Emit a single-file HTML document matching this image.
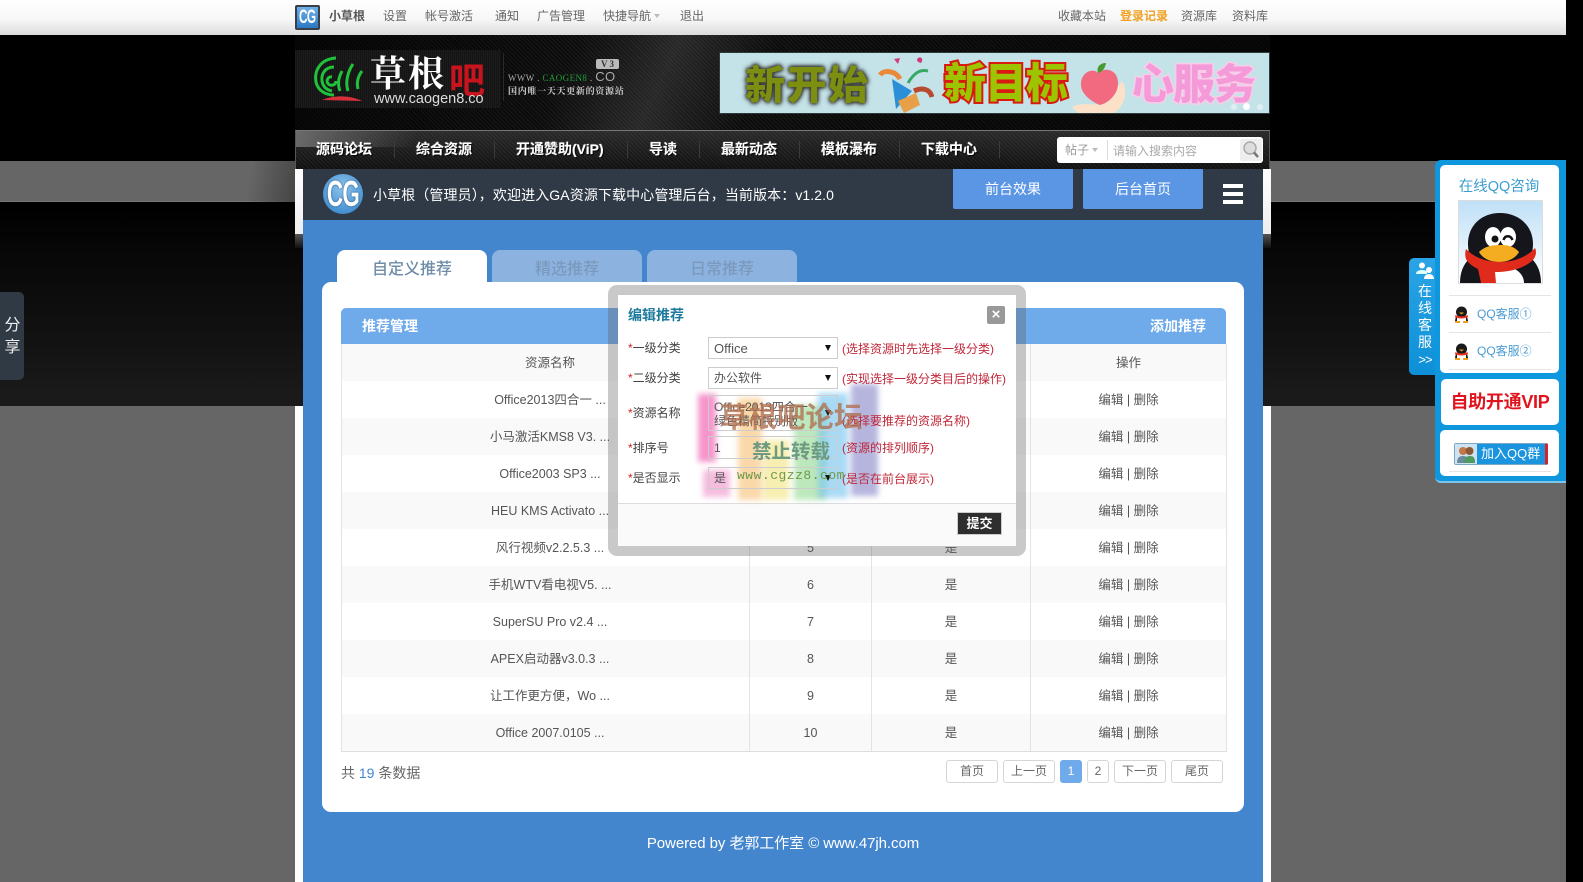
<!DOCTYPE html>
<html lang="zh"><head><meta charset="utf-8"><title>推荐管理</title>
<style>
*{box-sizing:border-box}
html,body{margin:0;padding:0;width:1583px;height:882px;overflow:hidden;background:#000}
body{position:relative;font-family:"Liberation Sans","Noto Sans CJK SC",sans-serif;font-size:12px;color:#555}
.a{position:absolute;white-space:nowrap}
.t{position:absolute;white-space:nowrap;line-height:20px;height:20px}
.top{color:#666;font-size:12px;top:6px}
.nv{position:absolute;top:139px;height:20px;line-height:20px;color:#fff;font-weight:bold;font-size:14px;text-shadow:1px 1px 1px #000,0 0 1px #fff;white-space:nowrap}
.sp{position:absolute;top:141px;width:1px;height:17px;background:#3b3b3b}
table{border-collapse:collapse;table-layout:fixed;position:absolute;left:341px;top:344px;width:885px;font-size:12.5px;color:#555}
td{height:37px;padding:1px 0 0;text-align:center;border-right:1px solid #e3e3e3;line-height:36px;white-space:nowrap}
td:first-child{padding-left:9px;border-left:1px solid #e3e3e3}
tr:nth-child(odd){background:#f9f9f9}
tr:last-child td{border-bottom:1px solid #ddd}
.pg{position:absolute;top:760px;height:23px;line-height:20px;text-align:center;border:1px solid #d5d5d5;border-radius:3px;background:#fff;color:#666;font-size:12px}
.lb{position:absolute;left:628px;height:20px;line-height:20px;font-size:12px;color:#444;white-space:nowrap}
.lb b{font-weight:normal;color:#c22}
.sel{position:absolute;left:708px;width:130px;border:1px solid #ccc;background:#fff;font-size:12px;color:#555;padding:0 5px;white-space:nowrap}
.sel i{position:absolute;right:6px;top:50%;margin-top:-3px;width:0;height:0;border-left:3.5px solid transparent;border-right:3.5px solid transparent;border-top:6px solid #111}
.ht{position:absolute;left:842px;height:20px;line-height:20px;font-size:12px;color:#c0283a;white-space:nowrap}
.bl{position:absolute;filter:blur(3px);opacity:.58}
</style></head><body>

<!-- page backgrounds -->
<div class="a" style="left:0;top:161px;width:1566px;height:41px;background:#666;border-bottom:1px solid #777"></div>
<div class="a" style="left:240px;top:161px;width:55px;height:41px;background:linear-gradient(100deg,rgba(68,68,68,0) 20%,#454545 100%)"></div>
<div class="a" style="left:0;top:202px;width:1566px;height:204px;background:linear-gradient(#000,#1b1b1b)"></div>
<div class="a" style="left:0;top:406px;width:1566px;height:476px;background:#666"></div>
<div class="a" style="left:295px;top:406px;width:976px;height:476px;background:#fff"></div>
<div class="a" style="left:295px;top:169px;width:976px;height:65px;background:linear-gradient(#fff,#eee)"></div>
<div class="a" style="left:295px;top:234px;width:976px;height:14px;background:linear-gradient(#555,#111)"></div>
<div class="a" style="left:295px;top:35px;width:975px;height:95px;background:repeating-linear-gradient(45deg,#1c1c1c 0,#1c1c1c 1px,#0d0d0d 1px,#0d0d0d 3px)"></div>
<div class="a" style="left:295px;top:35px;width:975px;height:95px;background:linear-gradient(115deg,rgba(0,0,0,.7) 0,rgba(0,0,0,.1) 28%,rgba(90,90,90,.35) 38%,rgba(0,0,0,.1) 48%,rgba(0,0,0,.7) 100%)"></div>

<!-- top bar -->
<div class="a" style="left:0;top:0;width:1566px;height:35px;background:linear-gradient(#fff 0,#f7f7f7 55%,#dcdcdc 100%)"></div>
<div class="a" style="left:295px;top:5px;width:25px;height:25px;background:#3a3f47;border-radius:2px;padding:2px"><div style="width:21px;height:21px;background:linear-gradient(#6fb0e8,#2a78c4);color:#fff;text-align:center;overflow:hidden"><span style="display:inline-block;font:bold 19px/21px 'Liberation Sans',sans-serif;transform:scaleX(.62);transform-origin:50% 50%;margin-left:-6px;margin-right:-6px;letter-spacing:-1px">CG</span></div></div>
<div class="t top" style="left:329px;font-weight:bold;color:#555">小草根</div>
<div class="t top" style="left:383px">设置</div>
<div class="t top" style="left:425px">帐号激活</div>
<div class="t top" style="left:495px">通知</div>
<div class="t top" style="left:537px">广告管理</div>
<div class="t top" style="left:603px">快捷导航</div>
<div class="a" style="left:654px;top:14px;border-left:3.5px solid transparent;border-right:3.5px solid transparent;border-top:4px solid #bbb"></div>
<div class="t top" style="left:680px">退出</div>
<div class="t top" style="left:1058px">收藏本站</div>
<div class="t top" style="left:1120px;color:#f0a020;font-weight:bold">登录记录</div>
<div class="t top" style="left:1181px">资源库</div>
<div class="t top" style="left:1232px">资料库</div>

<!-- logo -->
<div class="a" style="left:295px;top:50px;width:206px;height:58px;background:repeating-linear-gradient(90deg,#1c1c1c 0,#1c1c1c 1px,#141414 1px,#141414 2px)"></div>
<svg class="a" style="left:312px;top:53px" width="56" height="52" viewBox="0 0 56 52"><g fill="none" stroke="#1fc23a" stroke-width="3"><path d="M24 5C8 6 2 18 4 29c2 9 10 13 18 13"/><path d="M22 14c-9 0-13 7-12 14 1 6 5 9 10 10"/><path d="M20 24c-5-1-7 6-2 8 3 1 6-1 6-4M28 38c-3-8-1-14 2-20M36 38c-3-9 0-20 5-27M46 36c-2-8 1-14 4-18"/></g><path d="M10 47c12-5 28-5 40 1z" fill="#d8303a"/></svg>
<div class="a" style="left:370px;top:50px;font:bold 36px/44px 'Noto Serif CJK SC','Liberation Serif',serif;color:#fff;letter-spacing:2px">草根</div>
<div class="a" style="left:449px;top:56px;font:bold 36px/44px 'Noto Sans CJK SC',sans-serif;color:#c8141e">吧</div>
<div class="a" style="left:374px;top:90px;font:14.5px/18px 'Liberation Sans',sans-serif;color:#ddd">www.caogen8.co</div>
<div class="a" style="left:503px;top:53px;width:1px;height:48px;background:#2a2a2a"></div>
<div class="a" style="left:596px;top:59px;width:23px;height:10px;background:#bbb;border-radius:2px;font:bold 9px/10px 'Liberation Serif',serif;color:#333;text-align:center">V 3</div>
<div class="a" style="left:508px;top:69px;font:9px/14px 'Liberation Serif',serif;color:#aaa;letter-spacing:.4px">WWW . <span style="color:#1e9c3a">CAOGEN8</span> . <span style="font:13px 'Liberation Sans',sans-serif">CO</span></div>
<div class="a" style="left:508px;top:84px;font:bold 9px/14px 'Noto Serif CJK SC',serif;color:#ccc;letter-spacing:.7px">国内唯一天天更新的资源站</div>

<!-- banner -->
<div class="a" style="left:719px;top:52px;width:551px;height:62px;background:#c4e3e8;border:1px solid #2d3a3a;overflow:hidden">
 <div class="a" style="left:25px;top:5px;font:900 40px/48px 'Noto Sans CJK SC',sans-serif;color:#7d8f10;letter-spacing:1.500px;text-shadow:0 0 3px #333,0 0 5px #333,0 0 6px #333">新开始</div>
 <svg class="a" style="left:158px;top:2px" width="56" height="60" viewBox="0 0 56 60"><path d="M14 24l20 12-16 18z" fill="#2a8fd6"/><path d="M20 46l18-8 4 12-16 8z" fill="#e8a048"/><path d="M22 24C18 16 6 14 2 20" stroke="#e88a3a" stroke-width="5" fill="none"/><path d="M30 28C36 18 42 14 50 16" stroke="#38a868" stroke-width="3" fill="none"/><path d="M36 36c8-4 16-2 18 6" stroke="#b84a30" stroke-width="5" fill="none"/><path d="M16 4l6-1-2 6zM40 3c3-2 6 1 3 5-4-1-5-3-3-5z" fill="#d03a7a"/></svg>
 <div class="a" style="left:224px;top:0;font:900 42px/56px 'Noto Sans CJK SC',sans-serif;color:#9cc400;-webkit-text-stroke:4px #d81a10;paint-order:stroke fill;letter-spacing:-1px">新目标</div>
 <svg class="a" style="left:352px;top:8px" width="60" height="54" viewBox="0 0 60 54"><path d="M0 46c12-6 22 0 34-4l16-22c6 8 4 24-8 32H6z" fill="#fbe1c8"/><path d="M26 12c6-6 20-4 20 10 0 12-10 20-18 22C18 40 8 32 9 22 10 10 22 7 26 12z" fill="#f26a80"/><path d="M26 12c-2-6 2-10 8-10-1 6-4 9-8 10z" fill="#4a9a30"/></svg>
 <div class="a" style="left:412px;top:2px;font:900 42px/54px 'Noto Sans CJK SC',sans-serif;color:#f59ad8;letter-spacing:-1px;-webkit-text-stroke:3px #f9cdea;paint-order:stroke fill">心服务</div>
 <div class="a" style="left:511px;top:51px;width:6px;height:6px;background:#dfeef0;border-radius:50%"></div>
 <div class="a" style="left:523px;top:50px;width:7px;height:7px;background:#fff;border-radius:50%"></div>
 <div class="a" style="left:537px;top:51px;width:6px;height:6px;background:#dfeef0;border-radius:50%"></div>
</div>

<!-- nav -->
<div class="a" style="left:295px;top:130px;width:975px;height:39px;background:repeating-linear-gradient(45deg,rgba(255,255,255,.05) 0,rgba(255,255,255,.05) 1px,transparent 1px,transparent 3px),linear-gradient(#2a2a2a,#111);border-top:1px solid #777;border-left:1px solid #555;border-right:1px solid #555"></div>
<div class="a" style="left:296px;top:131px;width:120px;height:16px;background:linear-gradient(100deg,#6a6a6a,rgba(60,60,60,0))"></div>
<div class="nv" style="left:316px">源码论坛</div><div class="sp" style="left:394px"></div>
<div class="nv" style="left:416px">综合资源</div><div class="sp" style="left:494px"></div>
<div class="nv" style="left:516px">开通赞助(ViP)</div><div class="sp" style="left:627px"></div>
<div class="nv" style="left:649px">导读</div><div class="sp" style="left:699px"></div>
<div class="nv" style="left:721px">最新动态</div><div class="sp" style="left:799px"></div>
<div class="nv" style="left:821px">模板瀑布</div><div class="sp" style="left:899px"></div>
<div class="nv" style="left:921px">下载中心</div><div class="sp" style="left:999px"></div>
<div class="a" style="left:1057px;top:137px;width:206px;height:26px;background:#fff;border-radius:3px"></div>
<div class="t" style="left:1065px;top:140px;color:#999;font-size:12px">帖子</div>
<div class="a" style="left:1092px;top:148px;border-left:3.5px solid transparent;border-right:3.5px solid transparent;border-top:4px solid #bbb"></div>
<div class="a" style="left:1107px;top:140px;width:1px;height:20px;background:#ddd"></div>
<div class="t" style="left:1113px;top:141px;color:#aaa;font-size:12px">请输入搜索内容</div>
<svg class="a" style="left:1240px;top:139px" width="22" height="22" viewBox="0 0 22 22"><rect width="22" height="22" fill="#eee" rx="2"/><circle cx="10" cy="9" r="6" fill="#ddd" stroke="#aaa" stroke-width="1.500"/><path d="M14 13.500l4 4.500" stroke="#777" stroke-width="2.500"/></svg>

<!-- admin header -->
<div class="a" style="left:303px;top:169px;width:960px;height:51px;background:#303a47"></div>
<div class="a" style="left:303px;top:220px;width:960px;height:662px;background:#4386ce"></div>
<div class="a" style="left:323px;top:174px;width:40px;height:40px;border-radius:50%;background:radial-gradient(circle at 50% 35%,#8cc4ee,#2d7fc8);color:#fff;text-align:center;overflow:hidden;text-shadow:0 0 2px #135"><span style="display:inline-block;font:bold 36px/40px 'Liberation Sans',sans-serif;transform:scaleX(.62);margin:0 -10px;letter-spacing:-1px">CG</span></div>
<div class="a" style="left:373px;top:185px;height:20px;line-height:20px;font-size:14px;color:#fff;letter-spacing:.1px">小草根（管理员），欢迎进入GA资源下载中心管理后台，当前版本：v1.2.0</div>
<div class="a" style="left:953px;top:169px;width:120px;height:40px;background:#5b96e5;border-radius:0 0 2px 2px;color:#fff;font-size:14px;line-height:41px;text-align:center">前台效果</div>
<div class="a" style="left:1083px;top:169px;width:120px;height:40px;background:#5b96e5;border-radius:0 0 2px 2px;color:#fff;font-size:14px;line-height:41px;text-align:center">后台首页</div>
<div class="a" style="left:1223px;top:184px;width:20px;height:20px;background:linear-gradient(#fff 0,#fff 4px,transparent 4px,transparent 8px,#fff 8px,#fff 12px,transparent 12px,transparent 16px,#fff 16px,#fff 20px)"></div>

<!-- tabs -->
<div class="a" style="left:337px;top:250px;width:150px;height:34px;background:#fff;border-radius:8px 8px 0 0;color:#6f8ca8;font-size:16px;line-height:39px;text-align:center;font-weight:500">自定义推荐</div>
<div class="a" style="left:492px;top:250px;width:150px;height:32px;background:#8cb3e0;border-radius:8px 8px 0 0;color:#7b99bc;font-size:16px;line-height:39px;text-align:center;font-weight:500">精选推荐</div>
<div class="a" style="left:647px;top:250px;width:150px;height:32px;background:#8cb3e0;border-radius:8px 8px 0 0;color:#7b99bc;font-size:16px;line-height:39px;text-align:center;font-weight:500">日常推荐</div>

<!-- card -->
<div class="a" style="left:322px;top:282px;width:922px;height:530px;background:#fff;border-radius:9px"></div>
<div class="a" style="left:341px;top:308px;width:885px;height:36px;background:#6faaeb;border-radius:5px 5px 0 0"></div>
<div class="a" style="left:362px;top:316px;height:20px;line-height:20px;font-size:14px;font-weight:bold;color:#fff">推荐管理</div>
<div class="a" style="left:1150px;top:316px;height:20px;line-height:20px;font-size:14px;font-weight:bold;color:#fff">添加推荐</div>

<table>
<colgroup><col style="width:408px"><col style="width:122px"><col style="width:159px"><col style="width:196px"></colgroup>
<tbody>
<tr><td>资源名称</td><td>排序号</td><td>是否显示</td><td>操作</td></tr>
<tr><td>Office2013四合一 ...</td><td>1</td><td>是</td><td>编辑 | 删除</td></tr>
<tr><td>小马激活KMS8 V3. ...</td><td>2</td><td>是</td><td>编辑 | 删除</td></tr>
<tr><td>Office2003 SP3 ...</td><td>3</td><td>是</td><td>编辑 | 删除</td></tr>
<tr><td>HEU KMS Activato ...</td><td>4</td><td>是</td><td>编辑 | 删除</td></tr>
<tr><td>风行视频v2.2.5.3 ...</td><td>5</td><td>是</td><td>编辑 | 删除</td></tr>
<tr><td>手机WTV看电视V5. ...</td><td>6</td><td>是</td><td>编辑 | 删除</td></tr>
<tr><td>SuperSU Pro v2.4 ...</td><td>7</td><td>是</td><td>编辑 | 删除</td></tr>
<tr><td>APEX启动器v3.0.3 ...</td><td>8</td><td>是</td><td>编辑 | 删除</td></tr>
<tr><td>让工作更方便，Wo ...</td><td>9</td><td>是</td><td>编辑 | 删除</td></tr>
<tr><td>Office 2007.0105 ...</td><td>10</td><td>是</td><td>编辑 | 删除</td></tr>
</tbody></table>

<div class="a" style="left:341px;top:763px;height:20px;line-height:20px;font-size:14px;color:#666">共 <span style="color:#4386ce">19</span> 条数据</div>
<div class="pg" style="left:946px;width:52px">首页</div>
<div class="pg" style="left:1003px;width:52px">上一页</div>
<div class="pg" style="left:1060px;width:22px;background:#6faaeb;border-color:#6faaeb;color:#fff">1</div>
<div class="pg" style="left:1087px;width:22px">2</div>
<div class="pg" style="left:1114px;width:52px">下一页</div>
<div class="pg" style="left:1171px;width:52px">尾页</div>

<div class="a" style="left:303px;top:833px;width:960px;height:22px;line-height:22px;text-align:center;color:#fff;font-size:15px;letter-spacing:-.07px">Powered by 老郭工作室 © www.47jh.com</div>

<!-- modal -->
<div class="a" style="left:608px;top:285px;width:418px;height:271px;background:rgba(90,90,90,.33);border-radius:9px"></div>
<div class="a" style="left:618px;top:295px;width:398px;height:251px;background:#fff"></div>
<div class="a" style="left:618px;top:503px;width:398px;height:43px;background:#fafafa;border-top:1px solid #ddd"></div>
<div class="a" style="left:628px;top:305px;height:20px;line-height:20px;font-size:14px;font-weight:bold;color:#1c7a9c">编辑推荐</div>
<div class="a" style="left:987px;top:306px;width:18px;height:18px;background:#999;border-radius:2px;color:#fff;font:bold 15px/18px 'Liberation Sans',sans-serif;text-align:center">×</div>

<!-- watermark colours -->
<div class="bl" style="left:698px;top:394px;width:18px;height:68px;background:#ee4aa8"></div>
<div class="bl" style="left:703px;top:470px;width:27px;height:27px;background:#ef8cc8"></div>
<div class="bl" style="left:738px;top:398px;width:24px;height:102px;background:#f7bd6e"></div>
<div class="bl" style="left:763px;top:440px;width:26px;height:60px;background:#f2e27a"></div>
<div class="bl" style="left:794px;top:405px;width:32px;height:95px;background:#8fd88f"></div>
<div class="bl" style="left:818px;top:393px;width:30px;height:105px;background:#6cc0ee"></div>
<div class="bl" style="left:851px;top:384px;width:27px;height:112px;background:#8080c8"></div>

<div class="lb" style="top:338px"><b>*</b>一级分类</div>
<div class="sel" style="top:337px;height:22px;line-height:21px"><span style="font-size:13px">Office</span><i></i></div>
<div class="ht" style="top:339px">(选择资源时先选择一级分类)</div>
<div class="lb" style="top:368px"><b>*</b>二级分类</div>
<div class="sel" style="top:367px;height:22px;line-height:21px">办公软件<i></i></div>
<div class="ht" style="top:369px">(实现选择一级分类目后的操作)</div>
<div class="lb" style="top:403px"><b>*</b>资源名称</div>
<div class="sel" style="top:395px;height:36px;line-height:14px;padding-top:4px;background:transparent">Office2013四合一<br>绿色精简特别版<i></i></div>
<div class="ht" style="top:411px">(选择要推荐的资源名称)</div>
<div class="lb" style="top:438px"><b>*</b>排序号</div>
<div class="sel" style="top:436px;height:23px;line-height:22px;background:transparent">1</div>
<div class="ht" style="top:438px">(资源的排列顺序)</div>
<div class="lb" style="top:468px"><b>*</b>是否显示</div>
<div class="sel" style="top:467px;height:22px;line-height:21px;background:transparent">是<i></i></div>
<div class="ht" style="top:469px">(是否在前台展示)</div>

<div class="a" style="left:720px;top:401px;height:34px;line-height:34px;font-size:28.500px;font-weight:bold;color:rgba(176,110,80,.78)">草根吧论坛</div>
<div class="a" style="left:752px;top:438px;height:28px;line-height:28px;font-size:19.500px;font-weight:bold;color:#6e9a80">禁止转载</div>
<div class="a" style="left:737px;top:466px;height:20px;font:13px/20px 'Liberation Mono',monospace;color:#6f9a4a;letter-spacing:.5px">www.cgzz8.com</div>

<div class="a" style="left:957px;top:512px;width:45px;height:23px;background:#2e2e2e;border:1px solid #ccc;color:#fff;font-size:13px;font-weight:bold;line-height:21px;text-align:center">提交</div>

<!-- share -->
<div class="a" style="left:0;top:292px;width:24px;height:88px;background:#2f3a45;border-radius:0 5px 5px 0;color:#eee;font-size:16px;line-height:22px;text-align:center;padding-top:23px;white-space:normal;padding-left:1px">分<br>享</div>

<!-- QQ side panel -->
<div class="a" style="left:1409px;top:258px;width:28px;height:117px;background:linear-gradient(#2aa4e6,#0d90d8);border-radius:5px 0 0 5px"></div>
<svg class="a" style="left:1416px;top:262px" width="18" height="17" viewBox="0 0 18 17"><circle cx="6" cy="3.500" r="3" fill="#fff"/><path d="M0 12c0-3 3-4 6-4s5 1 5 3v1z" fill="#dff"/><circle cx="13" cy="8" r="3" fill="#fff"/><path d="M8 17c0-3 2-5 5-5s5 2 5 5z" fill="#fff"/></svg>
<div class="a" style="left:1412px;top:283px;width:26px;text-align:center;color:#fff;font-size:14px;line-height:17px;white-space:normal">在<br>线<br>客<br>服<br><span style="font-size:13px;letter-spacing:-1px">&gt;&gt;</span></div>
<div class="a" style="left:1435px;top:160px;width:131px;height:323px;background:#0f97de;border-radius:6px 0 0 6px;border-bottom:2px solid #7cc6ee"></div>
<div class="a" style="left:1440px;top:165px;width:119px;height:208px;background:#fff;border-radius:5px"></div>
<div class="a" style="left:1441px;top:379px;width:118px;height:46px;background:#fff;border-radius:5px"></div>
<div class="a" style="left:1440px;top:430px;width:119px;height:46px;background:#fff;border-radius:5px"></div>
<div class="a" style="left:1440px;top:176px;width:118px;height:22px;line-height:22px;text-align:center;color:#3c9ed0;font-size:14.500px">在线QQ咨询</div>
<svg class="a" style="left:1458px;top:200px" width="85" height="84" viewBox="0 0 85 84"><defs><linearGradient id="g" x1="0" y1="0" x2="0" y2="1"><stop offset="0" stop-color="#bfe0f7"/><stop offset="1" stop-color="#fff"/></linearGradient></defs><rect x=".5" y=".5" width="84" height="83" fill="url(#g)" stroke="#ddd"/><path d="M2 83c0-10 3-18 9-24C12 58 10 50 10 44 10 25 24 13 42 13s33 12 33 31c0 6-2 14-1 15 6 6 9 14 9 24z" fill="#15151c"/><path d="M26 83c0-10 6-17 18-17s22 7 22 17z" fill="#fff"/><ellipse cx="35" cy="37" rx="8" ry="10" fill="#fff"/><ellipse cx="50" cy="37" rx="8" ry="10" fill="#fff"/><circle cx="37" cy="39" r="3.500" fill="#111"/><path d="M45.500 40c1.500-5 7-5 9 0" stroke="#111" stroke-width="2.500" fill="none"/><path d="M21 52c6-6 14-7 21-7s14 1 19 7c-4 7-12 10-20 10s-16-3-20-10z" fill="#f4ac20"/><path d="M8 49c10 10 22 13 34 13s26-4 35-14c2 4 1 9-3 13-8 7-22 11-34 11h-3l1 11H23l-3-14C14 66 10 63 8 59c-1-3-1-7 0-10z" fill="#e02a1c"/></svg>
<div class="a" style="left:1449px;top:295px;width:102px;height:1px;background:#e4e4e4"></div>
<div class="a" style="left:1449px;top:332px;width:102px;height:1px;background:#e4e4e4"></div>
<div class="a" style="left:1449px;top:369px;width:102px;height:1px;background:#e4e4e4"></div>
<svg class="a" style="left:1454px;top:306px" width="15" height="17" viewBox="0 0 15 17"><ellipse cx="7.500" cy="6" rx="5.500" ry="5.500" fill="#1a1a1a"/><path d="M2 10h11l1 5H1z" fill="#1a1a1a"/><path d="M3 11h9v4H3z" fill="#fff"/><path d="M1.500 9c3 2 9 2 12 0l.5 2c-3 2-10 2-13 0z" fill="#e32"/><path d="M1 15h5v2H1zM9 15h5v2H9z" fill="#f0a020"/><path d="M5 6.500h5l-2.500 2z" fill="#f0a020"/></svg>
<div class="a" style="left:1477px;top:304px;height:20px;line-height:20px;font-size:12px;color:#4a9cd2">QQ客服①</div>
<svg class="a" style="left:1454px;top:343px" width="15" height="17" viewBox="0 0 15 17"><ellipse cx="7.500" cy="6" rx="5.500" ry="5.500" fill="#1a1a1a"/><path d="M2 10h11l1 5H1z" fill="#1a1a1a"/><path d="M3 11h9v4H3z" fill="#fff"/><path d="M1.500 9c3 2 9 2 12 0l.5 2c-3 2-10 2-13 0z" fill="#e32"/><path d="M1 15h5v2H1zM9 15h5v2H9z" fill="#f0a020"/><path d="M5 6.500h5l-2.500 2z" fill="#f0a020"/></svg>
<div class="a" style="left:1477px;top:341px;height:20px;line-height:20px;font-size:12px;color:#4a9cd2">QQ客服②</div>
<div class="a" style="left:1441px;top:390px;width:118px;height:24px;line-height:24px;text-align:center;color:#e0141e;font-size:18px;font-weight:bold;letter-spacing:-.3px">自助开通VIP</div>
<div class="a" style="left:1454px;top:443px;width:94px;height:22px;background:#1a94de;border:1px solid #7aa8c8;border-right:3px solid #d9222a;border-radius:2px"></div>
<div class="a" style="left:1455px;top:444px;width:22px;height:20px;background:#cfe2f0"></div>
<svg class="a" style="left:1457px;top:445px" width="18" height="18" viewBox="0 0 18 18"><circle cx="6" cy="6" r="4" fill="#c4774a"/><circle cx="12.500" cy="6" r="4" fill="#8a5a36"/><path d="M0 18c0-5 2-7 6-7s5 2 6 7z" fill="#6a8aa0"/><path d="M7 18c0-5 2-7 6-7s5 2 5 7z" fill="#4e9a60"/></svg>
<div class="a" style="left:1481px;top:444px;height:20px;line-height:20px;font-size:13px;color:#fff">加入QQ群</div>
<div class="a" style="left:1449px;top:471px;width:102px;height:1px;background:#e4e4e4"></div>

</body></html>
